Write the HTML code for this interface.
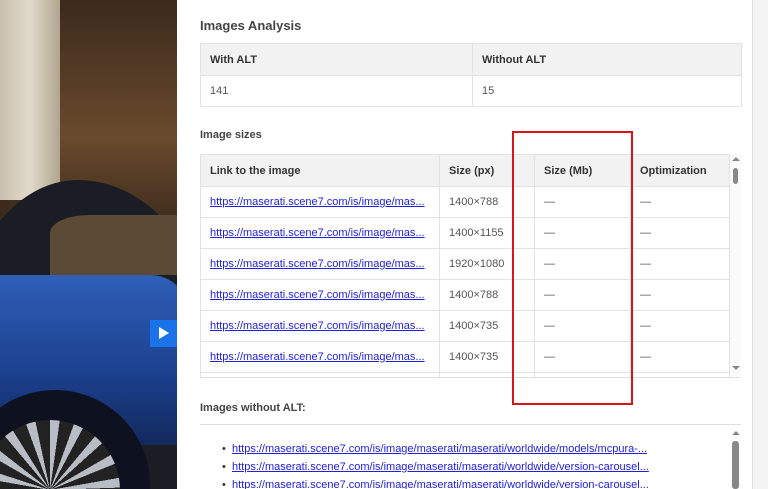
<!DOCTYPE html><html style="overflow:hidden"><head><style>
body{margin:0;width:768px;height:489px;overflow:hidden;position:relative;font-family:"Liberation Sans",sans-serif;background:#fff}
.img{position:absolute;left:0;top:0;width:177px;height:489px;overflow:hidden;background:linear-gradient(90deg,#3a2a1c,#5a3c24 50%,#4a3220)}
.side{position:absolute;left:752px;top:0;width:16px;height:489px;background:#f3f3f3;border-left:1px solid #ddd}
.p{position:absolute;color:#333;font-size:12px}
h3{position:absolute;margin:0;font-size:13px;color:#444;font-weight:bold}
table{position:absolute;border-collapse:collapse;font-size:11px;color:#555}
td,th{border:1px solid #e2e2e2;padding:0 9px;text-align:left;white-space:nowrap;overflow:hidden}
th{background:#f2f2f2;color:#333;font-weight:bold}
a{color:#2020e0;text-decoration:underline}
</style></head><body>
<div class="img">
<div style="position:absolute;left:0;top:0;width:60px;height:200px;background:linear-gradient(90deg,#c9bfae,#e2dacb 50%,#b0a590)"></div>
<div style="position:absolute;left:60px;top:0;width:117px;height:230px;background:linear-gradient(180deg,#3b2a1d,#6a4a2c 60%,#3a2a1c)"></div>
<div style="position:absolute;left:-40px;top:180px;width:260px;height:360px;border-radius:50% 60% 0 0;background:#1b1d24"></div>
<div style="position:absolute;left:50px;top:215px;width:130px;height:60px;background:#5b4a35;border-radius:30% 0 0 0"></div>
<div style="position:absolute;left:-20px;top:275px;width:210px;height:170px;background:linear-gradient(180deg,#2f5fb8,#1b3f8c 60%,#12295c);border-radius:10px 40px 0 0"></div>
<div style="position:absolute;left:-40px;top:390px;width:190px;height:190px;border-radius:50%;background:#0e1220"></div>
<div style="position:absolute;left:-20px;top:420px;width:140px;height:140px;border-radius:50%;background:repeating-conic-gradient(#b8bcc4 0 8deg,#222 8deg 20deg)"></div>
<div style="position:absolute;left:150px;top:320px;width:27px;height:27px;background:#1a73e8"></div>
<div style="position:absolute;left:159px;top:327px;width:0;height:0;border-left:10px solid #fff;border-top:6px solid transparent;border-bottom:6px solid transparent"></div>
</div>
<div class="side"></div>
<h3 style="left:200px;top:18px">Images Analysis</h3>
<table style="left:200px;top:43px;width:542px"><tr style="height:32px"><th style="width:253px">With ALT</th><th>Without ALT</th></tr><tr style="height:31px"><td>141</td><td>15</td></tr></table>
<h3 style="left:200px;top:129px;font-size:11px">Image sizes</h3>
<table style="left:200px;top:154px;width:530px;table-layout:fixed">
<tr style="height:32px"><th style="width:220px">Link to the image</th><th style="width:76px">Size (px)</th><th style="width:77px">Size (Mb)</th><th>Optimization</th></tr>
<tr style="height:31px"><td><a>https://maserati.scene7.com/is/image/mas...</a></td><td>1400×788</td><td>—</td><td>—</td></tr>
<tr style="height:31px"><td><a>https://maserati.scene7.com/is/image/mas...</a></td><td>1400×1155</td><td>—</td><td>—</td></tr>
<tr style="height:31px"><td><a>https://maserati.scene7.com/is/image/mas...</a></td><td>1920×1080</td><td>—</td><td>—</td></tr>
<tr style="height:31px"><td><a>https://maserati.scene7.com/is/image/mas...</a></td><td>1400×788</td><td>—</td><td>—</td></tr>
<tr style="height:31px"><td><a>https://maserati.scene7.com/is/image/mas...</a></td><td>1400×735</td><td>—</td><td>—</td></tr>
<tr style="height:31px"><td><a>https://maserati.scene7.com/is/image/mas...</a></td><td>1400×735</td><td>—</td><td>—</td></tr>
<tr style="height:5px"><td></td><td></td><td></td><td></td></tr>
</table>
<div style="position:absolute;left:200px;top:377px;width:541px;border-top:1px solid #ddd"></div>
<div style="position:absolute;left:730px;top:154px;width:11px;height:222px;background:#fafafa"></div>
<div style="position:absolute;left:733px;top:168px;width:5px;height:16px;background:#888;border-radius:3px"></div>
<div style="position:absolute;left:732px;top:157px;border-bottom:4px solid #888;border-left:4px solid transparent;border-right:4px solid transparent"></div>
<div style="position:absolute;left:732px;top:366px;border-top:4px solid #888;border-left:4px solid transparent;border-right:4px solid transparent"></div>
<div style="position:absolute;left:512px;top:131px;width:117px;height:270px;border:2px solid #d8141c"></div>
<h3 style="left:200px;top:402px;font-size:11px">Images without ALT:</h3>
<div style="position:absolute;left:200px;top:424px;width:541px;border-top:1px solid #ddd"></div>
<div class="p" style="left:222px;top:440px;line-height:18px;font-size:11px;height:49px;overflow:hidden">
<div>•&nbsp;&nbsp;<a>https://maserati.scene7.com/is/image/maserati/maserati/worldwide/models/mcpura-...</a></div>
<div>•&nbsp;&nbsp;<a>https://maserati.scene7.com/is/image/maserati/maserati/worldwide/version-carousel...</a></div>
<div>•&nbsp;&nbsp;<a>https://maserati.scene7.com/is/image/maserati/maserati/worldwide/version-carousel...</a></div>
</div>
<div style="position:absolute;left:732px;top:441px;width:7px;height:48px;background:#888;border-radius:3px"></div>
<div style="position:absolute;left:732px;top:431px;border-bottom:4px solid #888;border-left:4px solid transparent;border-right:4px solid transparent"></div>
</body></html>
